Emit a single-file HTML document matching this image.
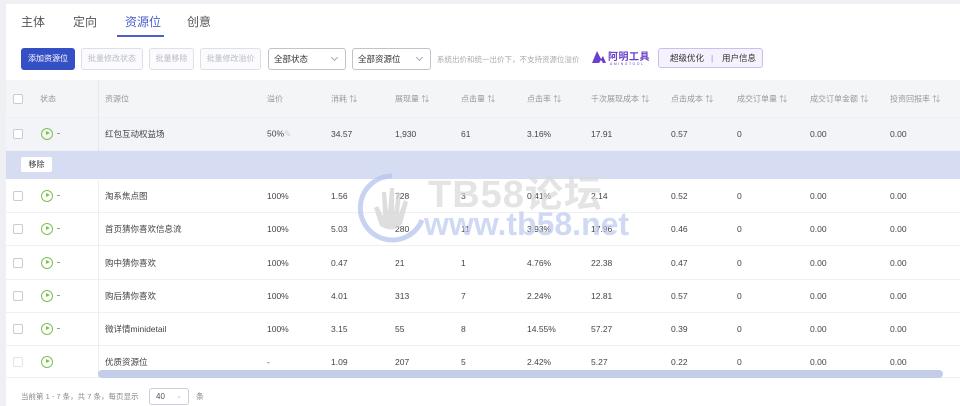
<!DOCTYPE html>
<html><head><meta charset="utf-8"><style>
*{box-sizing:border-box;margin:0;padding:0}
body{width:960px;height:406px;overflow:hidden;background:#eef0f4;font-family:"Liberation Sans","Noto Sans CJK SC",sans-serif;color:#333;position:relative}
.card{position:absolute;left:6px;top:4px;width:954px;height:402px;background:#fff}
.abs{position:absolute;white-space:nowrap}
.tab{font-size:12px;color:#555;top:13px}
.btn{position:absolute;top:48px;height:22px;border:1px solid #dde0e8;border-radius:3px;font-size:8px;color:#b8bcc6;text-align:center;line-height:20px;background:#fbfbfd}
.sel{position:absolute;top:48px;height:22px;border:1px solid #bfc3cc;border-radius:3px;font-size:8.5px;color:#333;line-height:20px;padding-left:5px;background:#fff}
.sel:after{content:"";position:absolute;right:8px;top:6px;width:4px;height:4px;border-right:1px solid #aaa;border-bottom:1px solid #aaa;transform:rotate(45deg)}
.row{position:absolute;left:6px;width:954px;font-size:8.5px;color:#444;border-bottom:1px solid #eef0f3}
.row span{position:absolute;top:50%;transform:translateY(-50%);white-space:nowrap}
.cb{position:absolute;left:7px;width:10px;height:10px;border:1px solid #c8ccd4;border-radius:2px;background:#fff;top:50%;margin-top:-5px}
.play{position:absolute;left:35px;top:50%;margin-top:-6px;width:12px;height:12px;border:1.5px solid #7cc24a;border-radius:50%}
.play:after{content:"";position:absolute;left:3.5px;top:2px;border-left:4px solid #7cc24a;border-top:2.5px solid transparent;border-bottom:2.5px solid transparent}
.dash{position:absolute;left:51px;top:50%;margin-top:-1px;width:3px;height:1px;background:#999}
.hd span{color:#999;font-size:8px}
</style></head><body>
<div class="card"></div>
<div class="abs tab" style="left:21px">主体</div>
<div class="abs tab" style="left:73px">定向</div>
<div class="abs tab" style="left:125px;color:#4a5fc9">资源位</div>
<div class="abs tab" style="left:187px">创意</div>
<div class="abs" style="left:117px;top:35px;width:47px;height:2px;background:#4a5fc9"></div>

<div class="btn" style="left:21px;width:54px;background:#3450c4;border-color:#3450c4;color:#fff">添加资源位</div>
<div class="btn" style="left:81px;width:62px">批量修改状态</div>
<div class="btn" style="left:149px;width:45px">批量移除</div>
<div class="btn" style="left:200px;width:61px">批量修改溢价</div>
<div class="sel" style="left:268px;width:78px">全部状态</div>
<div class="sel" style="left:352px;width:79px">全部资源位</div>
<div class="abs" style="left:437px;top:54px;font-size:7.5px;color:#aaa">系统出价和统一出价下，不支持资源位溢价</div>
<svg class="abs" style="left:592px;top:51px" width="14" height="12"><path d="M0 12 L5 0 L9 8 L11 5 L14 12 L11 12 L9 9 L7 12 Z M3 12 L5 7 L7 12Z" fill="#6a3fc9"/></svg>
<div class="abs" style="left:608px;top:48px;font-size:10px;font-weight:bold;color:#6a3fc9;letter-spacing:0.5px">阿明工具</div>
<div class="abs" style="left:610px;top:62px;font-size:3.5px;color:#6a3fc9;letter-spacing:1.5px">AMINGTOOL</div>
<div class="abs" style="left:658px;top:48px;width:105px;height:20px;border:1px solid #cdbdf0;border-radius:3px;background:#f5f1fd;font-size:8.5px;color:#333;line-height:18px"><span style="position:absolute;left:11px">超级优化</span><span style="position:absolute;left:52px;color:#a58be0">|</span><span style="position:absolute;left:63px">用户信息</span></div>

<div class="row hd" style="top:80px;height:38px;background:#f4f5f7">
<div class="cb" style="left:7px"></div>
<span style="left:34px">状态</span><span style="left:99px">资源位</span><span style="left:261px">溢价</span>
<span style="left:325px">消耗 ⇅</span><span style="left:389px">展现量 ⇅</span><span style="left:455px">点击量 ⇅</span><span style="left:521px">点击率 ⇅</span><span style="left:585px">千次展现成本 ⇅</span><span style="left:665px">点击成本 ⇅</span><span style="left:731px">成交订单量 ⇅</span><span style="left:804px">成交订单金额 ⇅</span><span style="left:884px">投资回报率 ⇅</span>
</div>
<div class="row" style="top:118px;height:33px;background:#f3f4f8">
<div class="cb"></div><div class="play"></div><div class="dash"></div>
<span style="left:99px">红包互动权益场</span><span style="left:261px">50%<span style="color:#ccc;position:static;transform:none">✎</span></span><span style="left:325px">34.57</span><span style="left:389px">1,930</span><span style="left:455px">61</span><span style="left:521px">3.16%</span><span style="left:585px">17.91</span><span style="left:665px">0.57</span><span style="left:731px">0</span><span style="left:804px">0.00</span><span style="left:884px">0.00</span>
</div>
<div class="abs" style="left:6px;top:151px;width:954px;height:28px;background:#d6ddf3"></div>
<div class="abs" style="left:21px;top:157px;width:31px;height:15px;background:#fff;border-radius:2px;font-size:8px;line-height:15px;text-align:center;color:#333">移除</div>

<div class="row" style="top:180px;height:33px"><div class="cb"></div><div class="play"></div><div class="dash"></div><span style="left:99px">淘系焦点图</span><span style="left:261px">100%</span><span style="left:325px">1.56</span><span style="left:389px">728</span><span style="left:455px">3</span><span style="left:521px">0.41%</span><span style="left:585px">2.14</span><span style="left:665px">0.52</span><span style="left:731px">0</span><span style="left:804px">0.00</span><span style="left:884px">0.00</span></div>
<div class="row" style="top:213px;height:33px"><div class="cb"></div><div class="play"></div><div class="dash"></div><span style="left:99px">首页猜你喜欢信息流</span><span style="left:261px">100%</span><span style="left:325px">5.03</span><span style="left:389px">280</span><span style="left:455px">11</span><span style="left:521px">3.93%</span><span style="left:585px">17.96</span><span style="left:665px">0.46</span><span style="left:731px">0</span><span style="left:804px">0.00</span><span style="left:884px">0.00</span></div>
<div class="row" style="top:246px;height:34px"><div class="cb"></div><div class="play"></div><div class="dash"></div><span style="left:99px">购中猜你喜欢</span><span style="left:261px">100%</span><span style="left:325px">0.47</span><span style="left:389px">21</span><span style="left:455px">1</span><span style="left:521px">4.76%</span><span style="left:585px">22.38</span><span style="left:665px">0.47</span><span style="left:731px">0</span><span style="left:804px">0.00</span><span style="left:884px">0.00</span></div>
<div class="row" style="top:280px;height:33px"><div class="cb"></div><div class="play"></div><div class="dash"></div><span style="left:99px">购后猜你喜欢</span><span style="left:261px">100%</span><span style="left:325px">4.01</span><span style="left:389px">313</span><span style="left:455px">7</span><span style="left:521px">2.24%</span><span style="left:585px">12.81</span><span style="left:665px">0.57</span><span style="left:731px">0</span><span style="left:804px">0.00</span><span style="left:884px">0.00</span></div>
<div class="row" style="top:313px;height:33px"><div class="cb"></div><div class="play"></div><div class="dash"></div><span style="left:99px">微详情minidetail</span><span style="left:261px">100%</span><span style="left:325px">3.15</span><span style="left:389px">55</span><span style="left:455px">8</span><span style="left:521px">14.55%</span><span style="left:585px">57.27</span><span style="left:665px">0.39</span><span style="left:731px">0</span><span style="left:804px">0.00</span><span style="left:884px">0.00</span></div>
<div class="row" style="top:346px;height:32px"><div class="cb" style="border-color:#e2e4ea"></div><div class="play"></div><span style="left:99px">优质资源位</span><span style="left:261px">-</span><span style="left:325px">1.09</span><span style="left:389px">207</span><span style="left:455px">5</span><span style="left:521px">2.42%</span><span style="left:585px">5.27</span><span style="left:665px">0.22</span><span style="left:731px">0</span><span style="left:804px">0.00</span><span style="left:884px">0.00</span></div>
<div class="abs" style="left:98px;top:80px;width:1px;height:71px;background:#e6e8ee"></div>
<div class="abs" style="left:98px;top:180px;width:1px;height:198px;background:#eceef2"></div>
<div class="abs" style="left:98px;top:370px;width:845px;height:8px;border-radius:4px;background:#c3cdea"></div>

<div class="abs" style="left:21px;top:391px;font-size:7.5px;color:#888">当前第 1 - 7 条，共 7 条，每页显示</div>
<div class="abs" style="left:149px;top:388px;width:40px;height:17px;border:1px solid #ccd;border-radius:3px;font-size:8px;line-height:15px;padding-left:6px;color:#555">40<span style="position:absolute;right:6px;color:#bbb;font-size:7px">⌄</span></div>
<div class="abs" style="left:196px;top:391px;font-size:8px;color:#888">条</div>

<svg class="abs" style="left:352px;top:168px;opacity:0.75" width="80" height="80"><path d="M40 8 A32 32 0 1 0 70 52" fill="none" stroke="#b6c5ee" stroke-width="5"/><path d="M28 58 L22 40 L26 38 L31 48 L30 24 L34 24 L36 44 L38 20 L42 20 L42 44 L45 24 L49 25 L47 46 L52 32 L56 34 L50 56 Q42 66 28 58Z" fill="#d4d4d4"/></svg>
<div class="abs" style="left:428px;top:163px;font-size:38px;font-weight:bold;color:#dadada;opacity:0.7;letter-spacing:1px">TB58论坛</div>
<div class="abs" style="left:424px;top:206px;font-size:32px;font-weight:bold;color:#bccaf0;opacity:0.7">www.tb58.net</div>
</body></html>
